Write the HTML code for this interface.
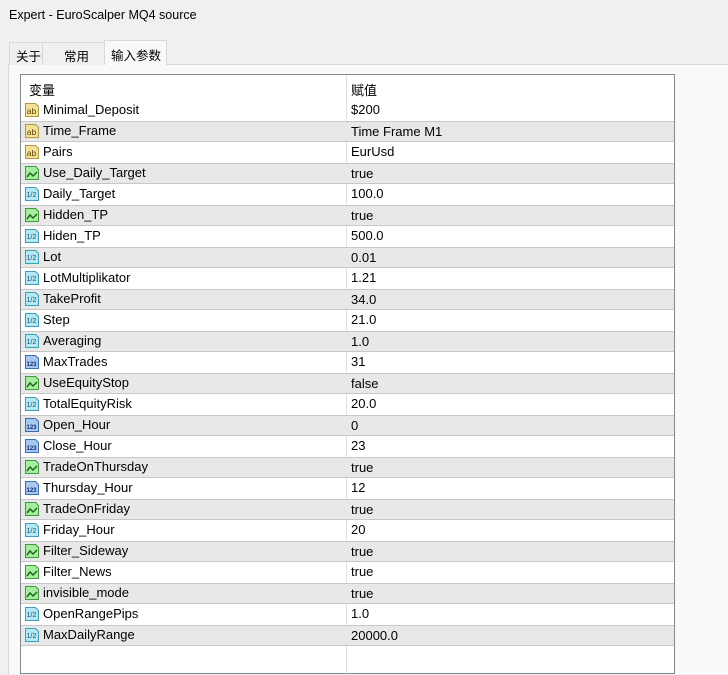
<!DOCTYPE html>
<html><head><meta charset="utf-8"><style>
*{margin:0;padding:0;box-sizing:border-box}
body{width:728px;height:664px;background:#f0f0f0;font-family:"Segoe UI","Liberation Sans","Noto Sans CJK SC",sans-serif;font-size:13px;color:#000;position:relative;overflow:hidden}
.title{position:absolute;left:9px;top:8px;font-size:12.5px}
.tab{position:absolute;top:42px;height:23px;border:1px solid #d9d9d9;border-bottom:none;background:#f0f0f0;padding:3px 0 0 6px;white-space:nowrap;font-size:12.5px}
.panel{position:absolute;left:8px;top:64px;width:730px;height:610px;background:#f9f9f9;border-top:1px solid #d9d9d9;border-left:1px solid #d9d9d9}
.tbl{position:absolute;left:20px;top:74px;width:655px;height:600px;background:#fff;border:1px solid #828790}
.hdr{position:absolute;left:0;top:0;width:653px;height:25px}
.hdr span{position:absolute;top:5px}
.vl{position:absolute;left:325px;top:0;width:1px;height:600px;background:#e0e0e0}
.row{position:absolute;left:0;width:653px;height:21px}
.g{background:#e8e8e8;border-top:1px solid #c8c8c8;border-bottom:1px solid #c8c8c8}
.row .n{position:absolute;left:22px;top:2px;white-space:nowrap}
.g .n,.g .v{top:1px}
.row .v{position:absolute;left:330px;top:2px}
.row svg{position:absolute;left:3px;top:2px}
.g svg{top:1px}
</style></head><body>
<div class="title">Expert - EuroScalper MQ4 source</div>
<div class="panel"></div>
<div class="tab" style="left:9px;width:34px">关于</div>
<div class="tab" style="left:42px;width:63px;padding-left:21px">常用</div>
<div class="tab" style="left:104px;top:40px;height:25px;width:63px;background:#f9f9f9;padding-top:4px">输入参数</div>
<div class="tbl">
<div class="hdr"><span style="left:8px">变量</span><span style="left:330px">赋值</span></div>
<div class="vl"></div>
<div id="rows"></div>
</div>
<script>
var R=[["Minimal_Deposit","$200","s"],["Time_Frame","Time Frame M1","s"],["Pairs","EurUsd","s"],["Use_Daily_Target","true","b"],["Daily_Target","100.0","d"],["Hidden_TP","true","b"],["Hiden_TP","500.0","d"],["Lot","0.01","d"],["LotMultiplikator","1.21","d"],["TakeProfit","34.0","d"],["Step","21.0","d"],["Averaging","1.0","d"],["MaxTrades","31","i"],["UseEquityStop","false","b"],["TotalEquityRisk","20.0","d"],["Open_Hour","0","i"],["Close_Hour","23","i"],["TradeOnThursday","true","b"],["Thursday_Hour","12","i"],["TradeOnFriday","true","b"],["Friday_Hour","20","d"],["Filter_Sideway","true","b"],["Filter_News","true","b"],["invisible_mode","true","b"],["OpenRangePips","1.0","d"],["MaxDailyRange","20000.0","d"]];
var I={s:['#f3e09a','#b29a3a','<text x="7.5" y="12" font-size="8.5" text-anchor="middle" fill="#5a4500" font-family="Liberation Sans">ab</text>'],
b:['#a8eca0','#3d9a3d','<path d="M3 12 L6 8 L9 11 L13 7" stroke="#1a6a1a" stroke-width="1.5" fill="none"/>'],
d:['#b6e8f2','#3aa0b8','<text x="7.5" y="11" font-size="7" text-anchor="middle" fill="#1a4a7a" font-family="Liberation Sans">1/2</text>'],
i:['#a9c8f0','#3b6eb0','<text x="7.5" y="12" font-size="6" text-anchor="middle" fill="#102a70" font-family="Liberation Sans" font-weight="bold">123</text>']};
var h='';R.forEach(function(r,k){var c=I[r[2]];h+='<div class="row'+(k%2?' g':'')+'" style="top:'+(25+21*k)+'px"><svg width="16" height="16"><path d="M1.5 1.5h10l3 3v10h-13z" fill="'+c[0]+'" stroke="'+c[1]+'"/>'+c[2]+'</svg><span class="n">'+r[0]+'</span><span class="v">'+r[1]+'</span></div>'});
document.getElementById('rows').innerHTML=h;
</script>
</body></html>
